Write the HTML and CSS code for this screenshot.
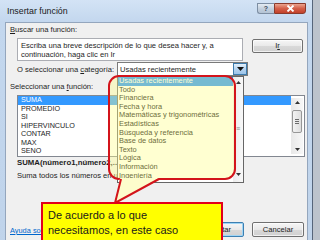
FILE: index.html
```html
<!DOCTYPE html>
<html lang="es">
<head>
<meta charset="utf-8">
<title>Insertar función</title>
<link rel="stylesheet" href="styles.css">
</head>
<body>
<div class="screen">
  <div class="window">
    <div class="titlebar">
      <span class="title">Insertar función</span>
      <div class="controls">
        <span class="btn-help">?</span>
        <span class="btn-close"><svg width="9" height="7" viewBox="0 0 9 7"><path d="M1.5 0.5 L7.5 6.5 M7.5 0.5 L1.5 6.5" stroke="#fff" stroke-width="1.8"/></svg></span>
      </div>
    </div>
    <div class="panel">
      <div class="label"><u>B</u>uscar una función:</div>
      <div class="search-row">
        <div class="search-box">Escriba una breve descripción de lo que desea hacer y, a<br>continuación, haga clic en Ir</div>
        <div class="btn btn-ir">I<u>r</u></div>
      </div>
      <div class="cat-row">
        <span class="cat-label">O seleccionar una <u>c</u>ategoría:</span>
        <div class="select">
          <span class="select-text">Usadas recientemente</span>
          <span class="select-arrow"><svg width="7" height="4" viewBox="0 0 7 4"><path d="M0 0 H7 L3.5 4 Z" fill="#111"/></svg></span>
        </div>
      </div>
      <div class="label label-fn">Seleccionar una <u>f</u>unción:</div>
      <div class="fn-list">
        <ul class="fn-items">
          <li class="sel">SUMA</li>
          <li>PROMEDIO</li>
          <li>SI</li>
          <li>HIPERVINCULO</li>
          <li>CONTAR</li>
          <li>MAX</li>
          <li>SENO</li>
        </ul>
        <div class="vscroll">
          <svg class="arr" width="5" height="3" viewBox="0 0 5 3"><path d="M0 3 H5 L2.5 0 Z" fill="#333"/></svg>
          <div class="thumb"><span class="grip"></span><span class="grip"></span><span class="grip"></span></div>
          <svg class="arr arr-down" width="5" height="3" viewBox="0 0 5 3"><path d="M0 0 H5 L2.5 3 Z" fill="#333"/></svg>
        </div>
      </div>
      <div class="syntax">SUMA(número1,número2,...)</div>
      <div class="desc">Suma todos los números en un rango de celdas.</div>
      <div class="bottom-row">
        <a class="help-link">Ayuda sobre esta función</a>
        <div class="btns">
          <div class="btn btn-ok">Aceptar</div>
          <div class="btn btn-cancel">Cancelar</div>
        </div>
      </div>
    </div>
  </div>

  <div class="dropdown">
    <ul class="dd-items">
      <li class="sel">Usadas recientemente</li>
      <li>Todo</li>
      <li>Financiera</li>
      <li>Fecha y hora</li>
      <li>Matemáticas y trigonométricas</li>
      <li>Estadísticas</li>
      <li>Búsqueda y referencia</li>
      <li>Base de datos</li>
      <li>Texto</li>
      <li>Lógica</li>
      <li>Información</li>
      <li>Ingeniería</li>
    </ul>
    <div class="dd-scroll">
      <svg width="5" height="3" viewBox="0 0 5 3"><path d="M0 3 H5 L2.5 0 Z" fill="#333"/></svg>
      <span class="dd-grip">≡</span>
      <svg width="5" height="3" viewBox="0 0 5 3"><path d="M0 0 H5 L2.5 3 Z" fill="#333"/></svg>
    </div>
  </div>

  <div class="bubble"></div>
  <svg class="tail" width="320" height="240" viewBox="0 0 320 240">
    <polygon points="120,178 159,178 115,203" fill="#fdfdcc"/>
    <polyline points="121,179 115,203 159,179" fill="none" stroke="#d3141b" stroke-width="2" stroke-linejoin="miter"/>
  </svg>

  <div class="note">De acuerdo a lo que<br>necesitamos, en este caso</div>
</div>
</body>
</html>
```
FILE: styles.css
```css
* { box-sizing: border-box; }
body { margin: 0; }
ul { list-style: none; margin: 0; padding: 0; }

.screen {
  width: 320px;
  height: 240px;
  position: relative;
  overflow: hidden;
  background: #bcc3cc;
  font-family: "Liberation Sans", Arial, sans-serif;
  color: #1e1e1e;
}

.window {
  width: 313px;
  height: 280px;
  padding: 0 4px 0 5px;
  border-right: 1px solid #56657a;
  background: linear-gradient(#d3e3f5, #c3d7ee 22px, #bfd3ea);
  display: flex;
  flex-direction: column;
}

.titlebar {
  height: 22px;
  display: flex;
  align-items: flex-start;
}
.title {
  padding-left: 2px;
  line-height: 22px;
  font-size: 8.8px;
  color: #1a1a1a;
}
.controls {
  margin-left: auto;
  margin-right: 2px;
  margin-top: 3px;
  display: flex;
}
.btn-help {
  width: 17px;
  height: 11px;
  border: 1px solid #7d8ea3;
  border-right: none;
  border-radius: 0 0 0 3px;
  background: linear-gradient(#e4ebf3, #c2cfdd 55%, #b4c3d4);
  font-size: 7px;
  line-height: 9px;
  text-align: center;
  color: #3b4a5c;
  font-weight: bold;
}
.btn-close {
  width: 32px;
  height: 11px;
  border: 1px solid #8a3a2c;
  border-radius: 0 0 3px 0;
  background: linear-gradient(#eba48f, #d4604a 50%, #c2412a);
  display: flex;
  align-items: center;
  justify-content: center;
}

.panel {
  flex: 1;
  background: #f0f0f0;
  border: 1px solid #94a6bd;
  font-size: 7.6px;
}

.label {
  margin-top: 2px;
  padding-left: 4px;
  height: 10px;
  line-height: 10px;
}
.label-fn { margin-top: 6px; }

.search-row {
  margin-top: 3px;
  margin-left: 11px;
  display: flex;
  align-items: flex-start;
  gap: 9px;
}
.search-box {
  width: 226px;
  height: 23px;
  background: #fff;
  border: 1px solid #abadb3;
  padding: 2px 0 0 3px;
  line-height: 9px;
}
.btn {
  height: 14px;
  border: 1px solid #707070;
  border-radius: 2px;
  background: linear-gradient(#f6f6f6, #e9e9e9 50%, #d9d9d9 51%, #d0d0d0);
  box-shadow: inset 0 0 0 1px rgba(255,255,255,0.7);
  font-size: 7.6px;
  line-height: 12px;
  text-align: center;
  color: #222;
}
.btn-ir {
  width: 51px;
  margin-top: 1px;
}

.cat-row {
  margin-top: 1px;
  margin-left: 11px;
  display: flex;
  align-items: center;
}
.cat-label {
  width: 100px;
  padding-top: 1px;
}
.select {
  width: 131px;
  height: 14px;
  background: #fff;
  border: 1px solid #7a7a7a;
  display: flex;
  align-items: center;
}
.select-text {
  flex: 1;
  padding-left: 2px;
}
.select-arrow {
  width: 14px;
  height: 12px;
  background: linear-gradient(#e3f0fb, #b6d4f0 50%, #9cc3e8);
  border: 1px solid #3d7bad;
  display: flex;
  align-items: center;
  justify-content: center;
}

.fn-list {
  margin-top: 3px;
  margin-left: 11px;
  width: 288px;
  height: 62px;
  background: #fff;
  border: 1px solid #828790;
  display: flex;
  padding: 0 1px 0 0;
}
.fn-items {
  flex: 1;
}
.fn-items li {
  height: 8.5px;
  line-height: 8.5px;
  padding-left: 3px;
  font-size: 7.2px;
}
.fn-items li.sel {
  background: #3399ff;
  color: #fff;
}
.vscroll {
  width: 12px;
  margin: 2px 0;
  background: linear-gradient(90deg, #e8e8e8, #f7f7f7);
  display: flex;
  flex-direction: column;
  align-items: center;
}
.arr { margin-top: 3px; }
.arr-down { margin-top: auto; margin-bottom: 3px; }
.thumb {
  margin-top: 6px;
  width: 10px;
  height: 23px;
  border: 1px solid #979797;
  border-radius: 2px;
  background: linear-gradient(90deg, #f3f3f3, #dedede);
  display: flex;
  flex-direction: column;
  align-items: center;
  justify-content: center;
  gap: 1px;
}
.grip {
  width: 4px;
  height: 1px;
  background: #6b6b6b;
}

.syntax {
  margin-top: 1px;
  padding-left: 11px;
  height: 10px;
  line-height: 10px;
  font-weight: bold;
  font-size: 7.8px;
}
.desc {
  margin-top: 3px;
  padding-left: 11px;
  height: 10px;
  line-height: 10px;
}

.bottom-row {
  margin-top: 41px;
  padding: 0 3px 0 4px;
  display: flex;
  align-items: center;
}
.help-link {
  color: #0066cc;
  text-decoration: underline;
  font-size: 7.4px;
  margin-top: 1px;
}
.btns {
  margin-left: auto;
  display: flex;
  gap: 8px;
}
.btns .btn {
  width: 52px;
  height: 15px;
  line-height: 13px;
}
.btn-ok {
  border-color: #3c7fb1;
  box-shadow: inset 0 0 0 1px #9fd5f5;
}

/* open category dropdown (overlay) */
.dropdown {
  position: absolute;
  left: 117px;
  top: 76px;
  width: 127px;
  height: 107px;
  background: #fff;
  border: 1px solid #666;
  display: flex;
  font-size: 7.4px;
  color: #000;
}
.dd-items { flex: 1; }
.dd-items li {
  height: 8.6px;
  line-height: 8.4px;
  padding-left: 1px;
  white-space: nowrap;
}
.dd-items li.sel {
  background: #1a8cff;
  color: #fff;
}
.dd-scroll {
  width: 10px;
  background: linear-gradient(90deg, #ececec, #f8f8f8);
  display: flex;
  flex-direction: column;
  align-items: center;
  justify-content: space-between;
  padding: 4px 0 6px;
}
.dd-grip {
  font-size: 7px;
  color: #888;
  line-height: 7px;
}

/* callout bubble (overlay) */
.bubble {
  position: absolute;
  left: 108px;
  top: 75px;
  width: 128px;
  height: 105px;
  border: 2px solid #d3141b;
  border-radius: 11px;
  background: rgba(255, 255, 140, 0.4);
}
.tail {
  position: absolute;
  left: 0;
  top: 0;
}

.note {
  position: absolute;
  left: 41px;
  top: 202px;
  width: 182px;
  height: 50px;
  background: #ffff00;
  border: 2px solid #e2001a;
  padding: 4px 0 0 5px;
  font-family: "Liberation Sans", Arial, sans-serif;
  font-size: 11px;
  line-height: 15px;
  color: #1a1a1a;
}
```
